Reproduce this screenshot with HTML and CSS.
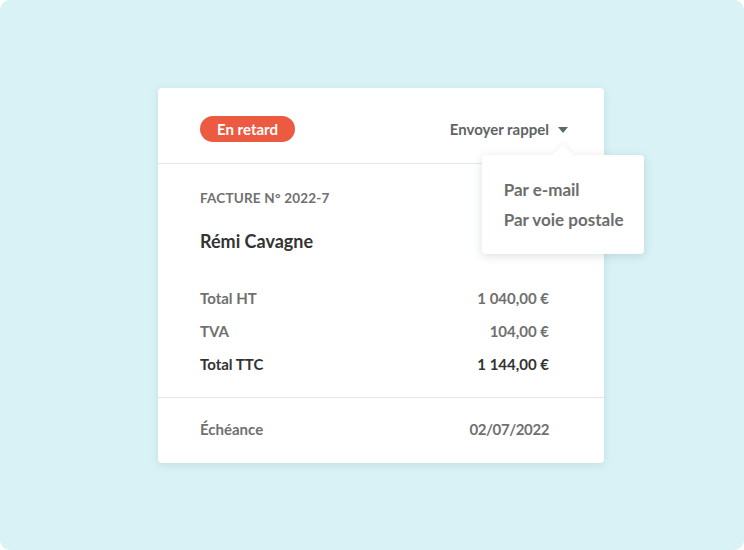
FILE: index.html
```html
<!DOCTYPE html>
<html>
  <head>
    <meta charset="UTF-8"/>
    <title>Facture 2022-7</title>
    <link rel="stylesheet" href="styles.css">
  </head>
  <body>
    <div class="frame">
      <div class="card">
        <div class="card-head">
          <span class="badge">En retard</span>
          <div class="reminder">
            <span>Envoyer rappel</span>
            <span class="caret"></span>
            <ul class="menu">
              <li>Par e-mail</li>
              <li>Par voie postale</li>
            </ul>
          </div>
        </div>
        <div class="card-body">
          <div class="invoice-no">FACTURE N° 2022-7</div>
          <div class="client">Rémi Cavagne</div>
          <div class="row"><span>Total HT</span><span>1 040,00 €</span></div>
          <div class="row"><span>TVA</span><span>104,00 €</span></div>
          <div class="row total"><span>Total TTC</span><span>1 144,00 €</span></div>
        </div>
        <div class="card-foot">
          <div class="row"><span>Échéance</span><span class="date">02/07/2022</span></div>
        </div>
      </div>
    </div>
  </body>
</html>
```

FILE: styles.css
```css
body {
  margin: 0;
  background: #fff;
  font-family: 'Lato', 'Noto Sans', sans-serif;
  color: #707070;
}

.frame {
  width: 744px;
  height: 550px;
  box-sizing: border-box;
  padding: 88px 0 0 158px;
  background: #d9f2f5;
  border-radius: 10px;
}

.card {
  width: 446px;
  background: #fff;
  border-radius: 4px;
  box-shadow: 0 2px 8px rgba(60, 110, 120, 0.14);
}

.card-head {
  display: flex;
  align-items: center;
  justify-content: space-between;
  padding: 28px 36px 21px 42px;
  border-bottom: 1px solid #e6e6e6;
}

.badge {
  display: inline-block;
  height: 26px;
  line-height: 26px;
  padding: 0 17px;
  border-radius: 13px;
  background: #ec5b41;
  color: #fff;
  font-size: 15px;
  font-weight: bold;
}

.reminder {
  position: relative;
  display: flex;
  align-items: center;
  gap: 9px;
  font-size: 15px;
  font-weight: bold;
  color: #5f6464;
}

.caret {
  width: 0;
  height: 0;
  border-left: 5px solid transparent;
  border-right: 5px solid transparent;
  border-top: 6px solid #5b6a6a;
  margin-top: 1px;
}

.menu {
  position: absolute;
  top: 35px;
  left: 32px;
  width: 162px;
  box-sizing: border-box;
  margin: 0;
  padding: 20px 20px 19px 22px;
  list-style: none;
  background: #fff;
  border-radius: 4px;
  box-shadow: 0 2px 10px rgba(40, 70, 80, 0.16);
  font-size: 17px;
  font-weight: bold;
  color: #6d6d6d;
  white-space: nowrap;
}

.menu::before {
  content: "";
  position: absolute;
  top: -8px;
  left: 74px;
  width: 14px;
  height: 14px;
  background: #fff;
  transform: rotate(45deg);
  box-shadow: -2px -2px 4px rgba(40, 70, 80, 0.05);
}

.menu li {
  position: relative;
  line-height: 30px;
}

.card-body {
  padding: 25px 55px 16px 42px;
}

.invoice-no {
  font-size: 13.5px;
  font-weight: bold;
  line-height: 18px;
  letter-spacing: 0.2px;
}

.client {
  margin: 23px 0 30px;
  font-size: 18px;
  font-weight: bold;
  line-height: 22px;
  color: #333;
}

.row {
  display: flex;
  justify-content: space-between;
  font-size: 15px;
  font-weight: bold;
  line-height: 33px;
}

.row.total {
  color: #333;
}

.date {
  letter-spacing: -0.4px;
}

.card-foot {
  border-top: 1px solid #e6e6e6;
  padding: 15px 55px 17px 42px;
}
```
